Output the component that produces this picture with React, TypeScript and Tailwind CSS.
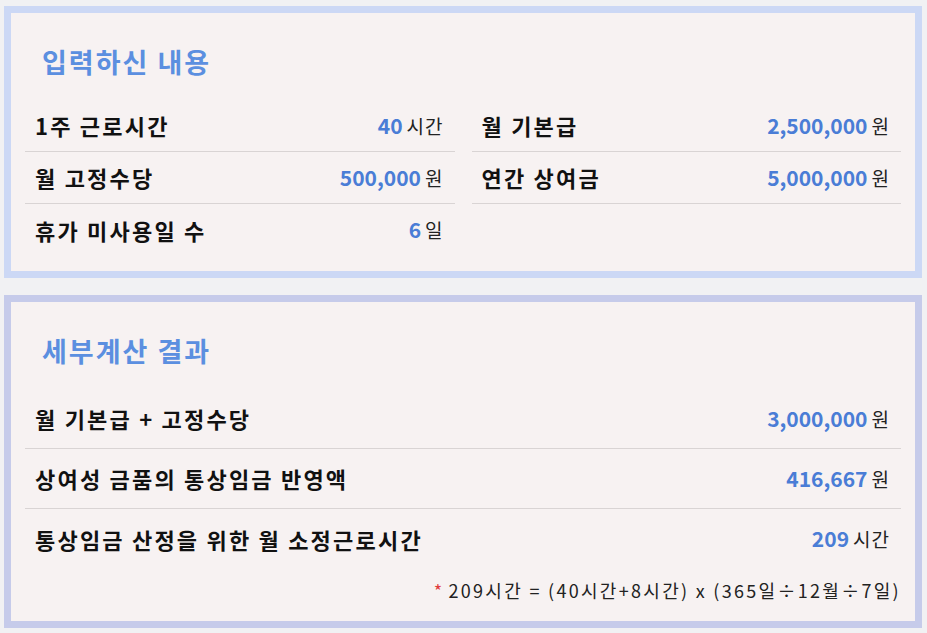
import React from "react";

const font = { fontFamily: '"Noto Sans CJK KR", "Noto Sans", sans-serif' };

interface Item {
  label: string;
  value: string;
  unit: string;
}

const leftInputs: Item[] = [
  { label: "1주 근로시간", value: "40", unit: "시간" },
  { label: "월 고정수당", value: "500,000", unit: "원" },
  { label: "휴가 미사용일 수", value: "6", unit: "일" },
];

const rightInputs: Item[] = [
  { label: "월 기본급", value: "2,500,000", unit: "원" },
  { label: "연간 상여금", value: "5,000,000", unit: "원" },
];

const results: Item[] = [
  { label: "월 기본급 + 고정수당", value: "3,000,000", unit: "원" },
  { label: "상여성 금품의 통상임금 반영액", value: "416,667", unit: "원" },
  { label: "통상임금 산정을 위한 월 소정근로시간", value: "209", unit: "시간" },
];

function Row({ item, tall, border }: { item: Item; tall?: boolean; border: boolean }) {
  return (
    <div
      className={
        "flex items-center justify-between pl-[10px] pr-[11px] " +
        (tall ? "h-[60px] " : "h-[52px] ") +
        (border ? "border-b border-[#d9d4d4]" : "")
      }
    >
      <span className="text-[22px] font-bold text-[#111] tracking-[2.2px]">{item.label}</span>
      <span className="flex items-baseline">
        <span className="text-[21px] font-bold text-[#4a7dd6]">{item.value}</span>
        <span className="ml-[4px] text-[19px] text-[#222] tracking-[1px]">{item.unit}</span>
      </span>
    </div>
  );
}

function Title({ children }: { children: React.ReactNode }) {
  return (
    <div className="h-[87px] pl-[17px] pt-[32px]">
      <h2 className="text-[27px] leading-[34px] font-bold text-[#5b8fe0] tracking-[2px]">{children}</h2>
    </div>
  );
}

export default function App() {
  return (
    <div className="min-h-[633px] w-[927px] bg-[#f1f1f3] pt-[6px] pl-[4px]" style={font}>
      <div className="w-[918px] h-[272px] border-[7px] border-[#ccd8f5] bg-[#f7f2f2] px-[14px]">
        <Title>입력하신 내용</Title>
        <div className="grid grid-cols-2 gap-x-[17px]">
          <div>
            {leftInputs.map((it, i) => (
              <Row key={it.label} item={it} border={i < leftInputs.length - 1} />
            ))}
          </div>
          <div>
            {rightInputs.map((it) => (
              <Row key={it.label} item={it} border />
            ))}
          </div>
        </div>
      </div>

      <div className="mt-[17px] w-[918px] h-[333px] border-[7px] border-[#c6cbea] bg-[#f7f2f2] px-[14px]">
        <Title>세부계산 결과</Title>
        <div>
          {results.map((it, i) => (
            <Row key={it.label} item={it} tall border={i < results.length - 1} />
          ))}
        </div>
        <p className="mt-[8px] text-right text-[18px] text-[#222] tracking-[2.3px]">
          <span className="text-[#e03c3c] mr-[4px]">*</span>
          209시간 = (40시간+8시간) x (365일÷12월÷7일)
        </p>
      </div>
    </div>
  );
}
